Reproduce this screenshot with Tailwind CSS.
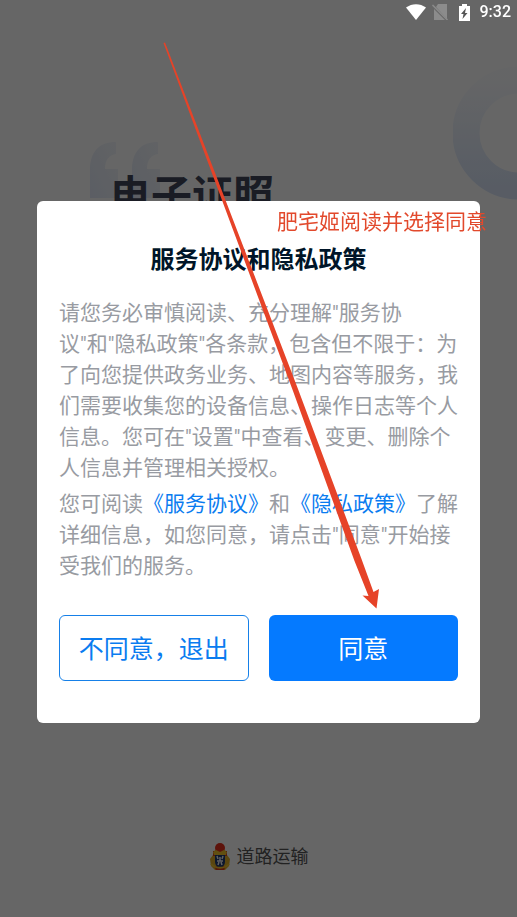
<!DOCTYPE html>
<html lang="zh-CN">

<head>
  <meta charset="UTF-8">
  <meta name="viewport" content="width=device-width, initial-scale=1.0">
  <title>道路运输电子证照</title>
  <script src="https://cdn.jsdelivr.net/npm/@tailwindcss/browser@4"></script>
</head>

<body class="font-[Roboto,'Noto_Sans_CJK_SC',sans-serif] bg-white">

  <!-- Splash page -->
  <div class="relative min-h-screen flex flex-col justify-between overflow-hidden">
    <svg class="absolute top-16 right-0 w-16 h-36" viewBox="0 0 64 144" fill="none" aria-hidden="true">
      <defs>
        <linearGradient id="ring" x1="0" y1="0" x2="0" y2="1">
          <stop offset="0" stop-color="#dbe7fb" stop-opacity="0.1" />
          <stop offset="1" stop-color="#dbe7fb" />
        </linearGradient>
      </defs>
      <circle cx="66" cy="69" r="53" stroke="url(#ring)" stroke-width="27" />
    </svg>

    <header class="pt-[142px] pl-[90px]">
      <div class="relative">
        <svg class="w-[72px] h-14" viewBox="0 0 72 56" aria-hidden="true">
          <defs>
            <linearGradient id="quote" x1="1" y1="0" x2="0" y2="1">
              <stop offset="0" stop-color="#f4f7fc" />
              <stop offset="1" stop-color="#e4ebf9" />
            </linearGradient>
          </defs>
          <path fill="url(#quote)" d="M0 56V28C0 10 9 0 26 0v12c-7 1-11 6-11 15h13v29z" />
          <path fill="url(#quote)" d="M42 56V28C42 10 51 0 68 0v12c-7 1-11 6-11 15h13v29z" />
        </svg>
        <h1 class="absolute top-[26px] left-5 text-[41px] leading-[56px] font-bold text-[#41465a]">电子证照</h1>
      </div>
    </header>

    <footer class="flex justify-center items-center gap-1.5 pb-[46px] text-lg text-[#555555]">
      <svg class="w-[22px] h-7" viewBox="0 0 22 28" aria-hidden="true">
        <path fill="#e0b02a" d="M6 7h10l2 5 3 4-1 7-4 4H6l-4-4-1-7 3-4z" />
        <path fill="#d93a1c" d="M4 8h14v5H4zM5 23h12l-2 4H7z" />
        <circle cx="11" cy="5" r="5" fill="#e8301c" />
        <path fill="#f5c52c" d="M4 9l3-2 4 2 4-2 3 2-1 3H5z" />
        <path fill="#1f3a70" d="M6 12h10v7c0 3-2 5-5 6-3-1-5-3-5-6z" />
        <path fill="none" stroke="#f2f2f2" stroke-width="1.5" d="M8 13l1 3M14 13l-1 3M11 14v4M8 18h6M9 22l1-3M13 22l-1-3" />
        <path fill="none" stroke="#f5c52c" stroke-width="2" d="M2 21c4 5 14 5 18 0" />
      </svg>
      <span>道路运输</span>
    </footer>
  </div>

  <!-- Agreement dialog -->
  <div class="fixed inset-0 flex items-center px-[37px] pt-1.5 bg-black/60">
    <section class="relative w-full px-[22px] pt-[41px] pb-[42px] rounded-md bg-white" role="dialog" aria-modal="true" aria-labelledby="title">
      <h2 id="title" class="text-2xl leading-9 font-bold text-center text-[#001528]">服务协议和隐私政策</h2>
      <div class="mt-5 text-[21px] leading-[31px] text-[#989ba2]">
        <p>请您务必审慎阅读、充分理解"服务协议"和"隐私政策"各条款，包含但不限于：为了向您提供政务业务、地图内容等服务，我们需要收集您的设备信息、操作日志等个人信息。您可在"设置"中查看、变更、删除个人信息并管理相关授权。</p>
        <p class="mt-[5px]">您可阅读<a href="#" class="text-[#0a7cf0]">《服务协议》</a>和<a href="#" class="text-[#0a7cf0]">《隐私政策》</a>了解详细信息，如您同意，请点击"同意"开始接受我们的服务。</p>
      </div>
      <div class="mt-[33px] grid grid-cols-2 gap-5 text-[25px]">
        <button type="button" class="h-[66px] pt-1 rounded-md border border-[#1680e8] text-[#0a7cf0]">不同意，退出</button>
        <button type="button" class="h-[66px] pt-1 rounded-md bg-[#057aff] text-white">同意</button>
      </div>

      <!-- Note and arrow over the dialog -->
      <p class="absolute top-1.5 -right-[7px] text-[21px] leading-[31px] whitespace-nowrap text-[#e2492c]">肥宅姬阅读并选择同意</p>
      <svg class="absolute -top-40 left-[126px] w-[218px] h-[570px] pointer-events-none" viewBox="0 0 218 570" aria-hidden="true">
        <path fill="#e64328" d="M.5 2 2 1.500 135 348 198.500 518 210.500 551l5.500-3-2.500 19.500-14-13 6 .5-14-35L130 350z" />
      </svg>
    </section>
  </div>

  <!-- Status bar -->
  <div class="fixed top-0 inset-x-0 flex justify-end items-center gap-1.5 h-6 pr-1.5 text-white">
    <svg class="w-5 h-4" viewBox="0 0 20 16" aria-hidden="true">
      <path fill="#fff" d="M0 3.500C6-1 14-1 20 3.500L10 16z" />
    </svg>
    <svg class="w-4 h-4" viewBox="0 0 16 16" aria-hidden="true">
      <path fill="#8c8c8c" d="M6 0h9v15L4 3zM2 5l11 11H2z" />
      <path stroke="#8c8c8c" stroke-width="1.500" d="M.5 1 15.500 16" />
    </svg>
    <svg class="w-5 h-[17px]" viewBox="0 0 20 17" aria-hidden="true">
      <path fill="#fff" d="M5 2h3V0h5v2h3v15H5z" />
      <path fill="#555" d="M12 4 7 10h2.500L8.500 15l5-6H11z" />
    </svg>
    <span class="text-base leading-6 font-medium">9:32</span>
  </div>

</body>

</html>
